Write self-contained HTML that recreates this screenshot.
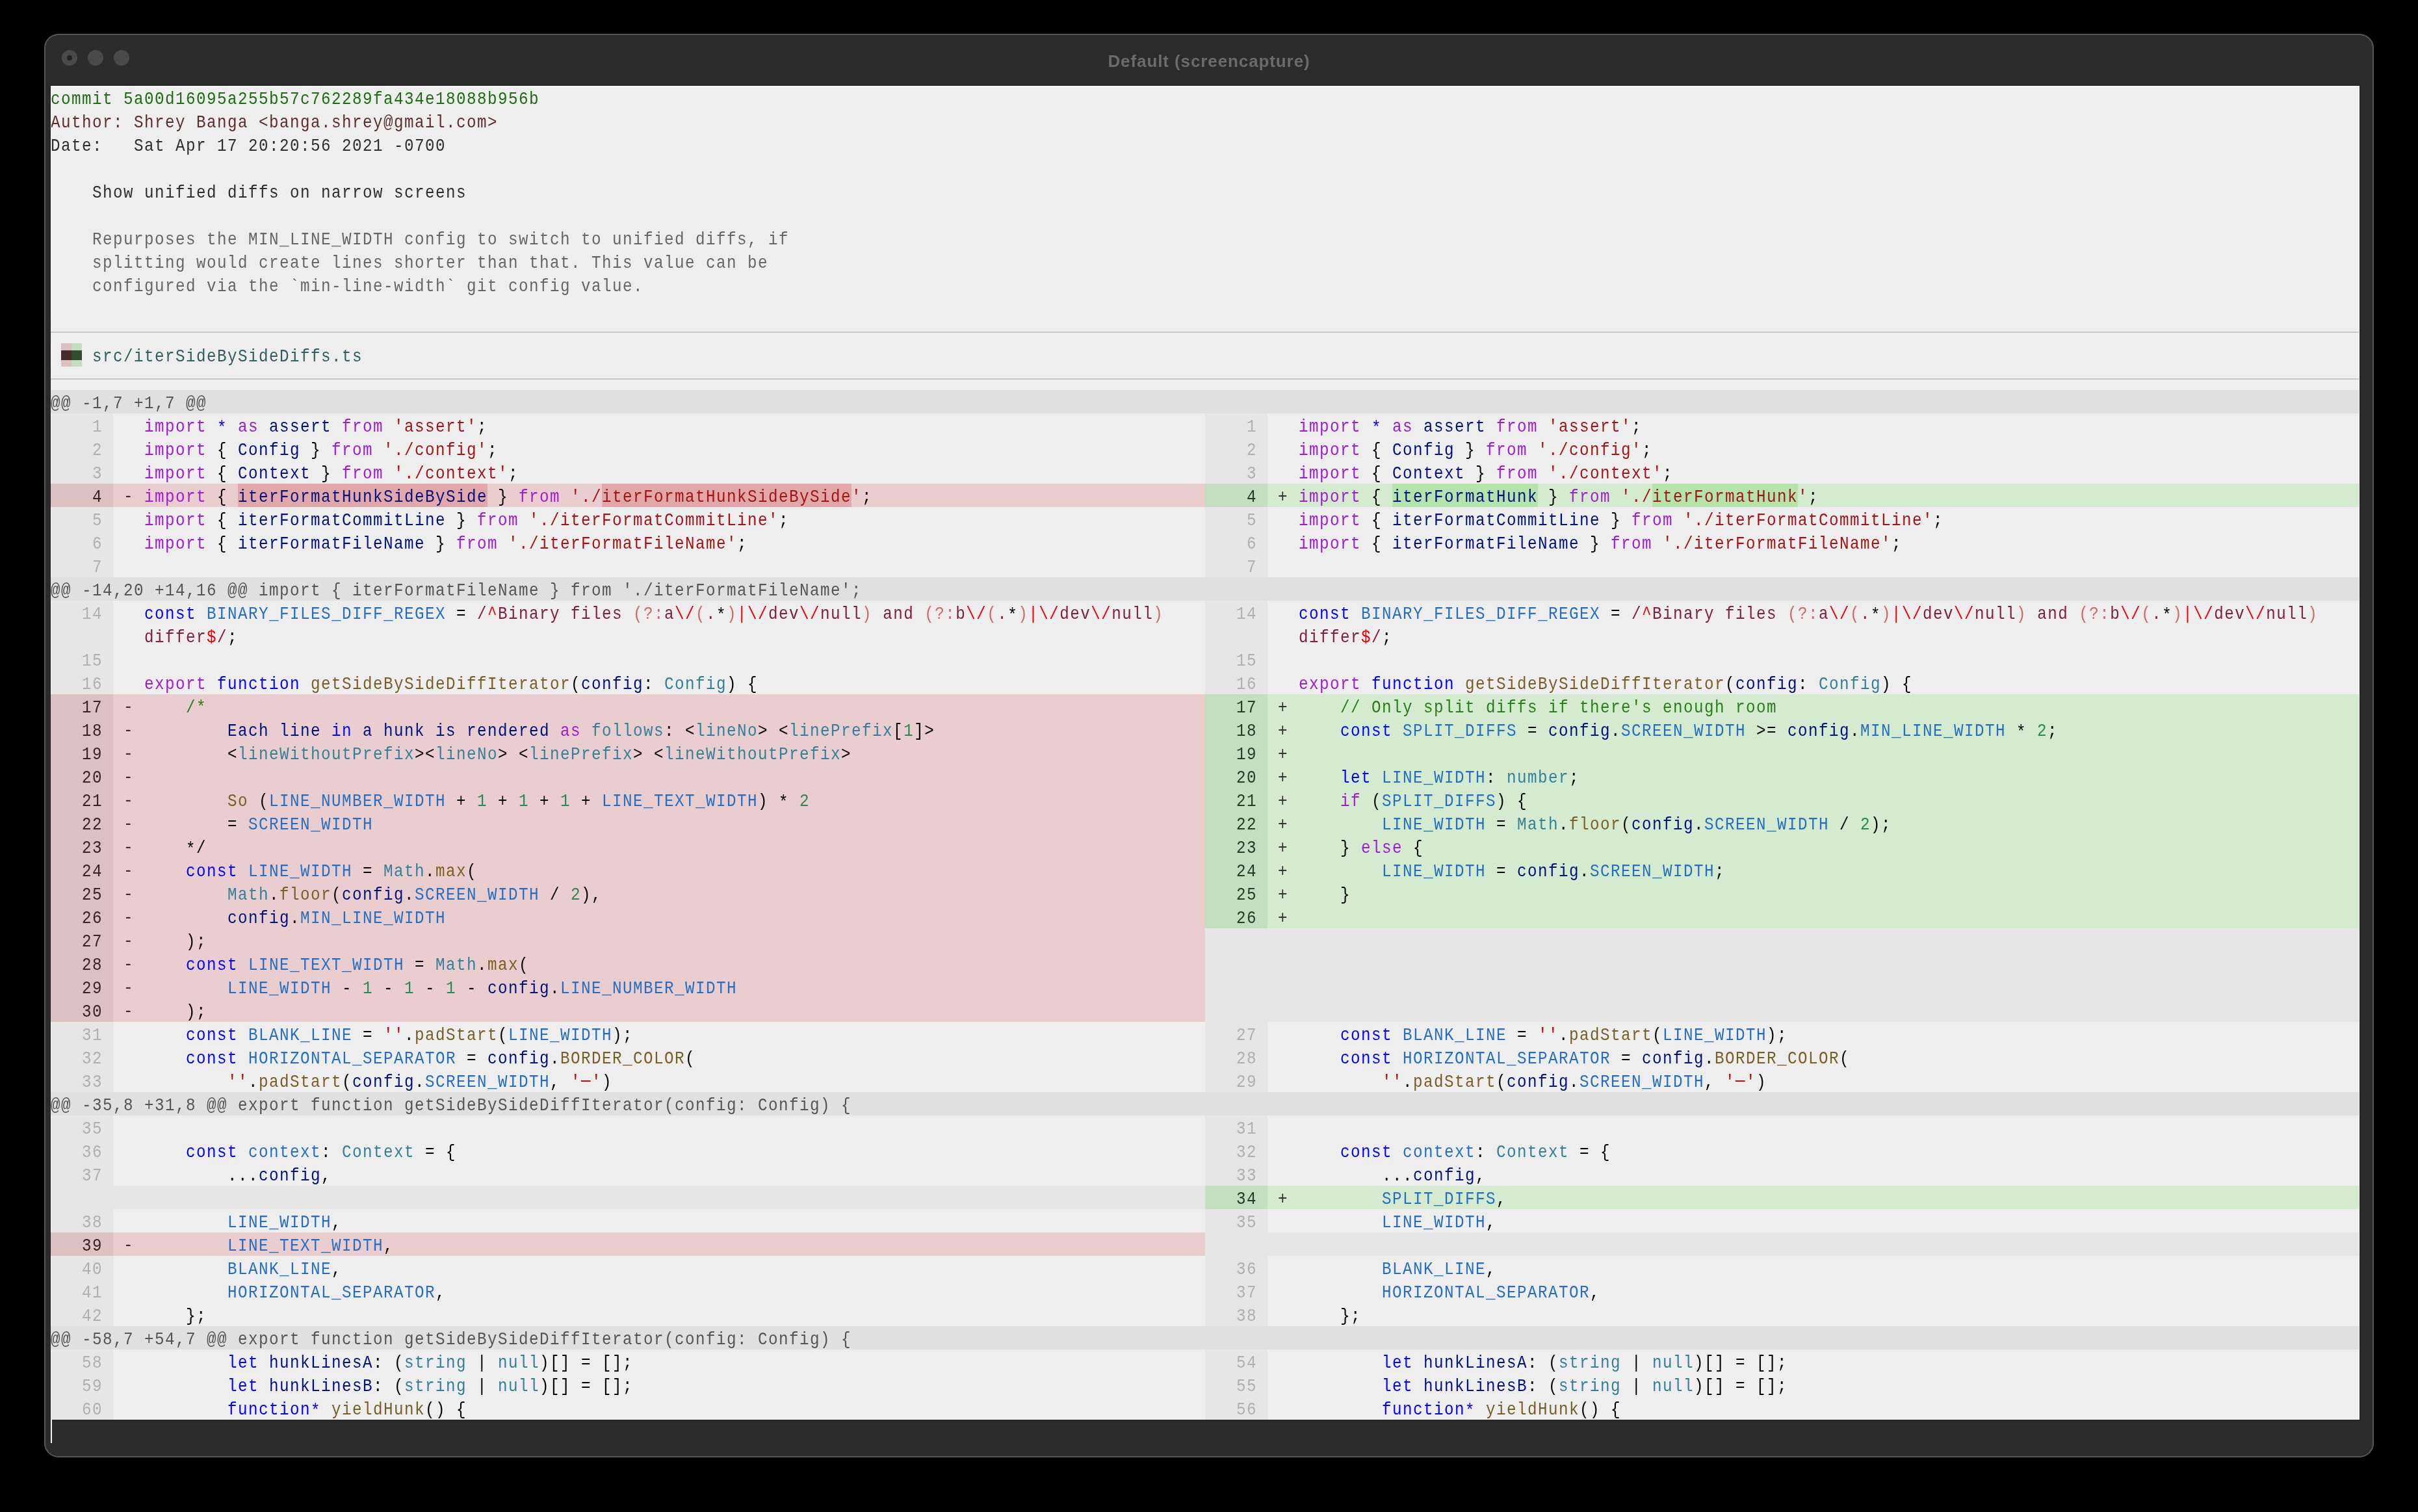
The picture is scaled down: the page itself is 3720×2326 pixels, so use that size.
<!DOCTYPE html>
<html><head><meta charset="utf-8"><style>
html,body{margin:0;padding:0;}
body{width:3720px;height:2326px;background:#000;position:relative;overflow:hidden;}
#w div{position:absolute;}
#w{position:absolute;left:0;top:0;width:3720px;height:2326px;will-change:transform;}
.t{font-family:"Liberation Mono",monospace;font-size:28.5px;letter-spacing:1.720746px;line-height:36px;white-space:pre;height:36px;padding-top:3px;box-sizing:border-box;transform:scaleX(0.85);transform-origin:0 0;}
</style></head><body><div id="w">
<div style="left:68px;top:52px;width:3584px;height:2190px;border-radius:22px;background:#2b2b2b;box-shadow:inset 0 0 0 2px #555;"></div>
<div style="left:95px;top:77px;width:24px;height:24px;border-radius:50%;background:#4a4a4a"></div>
<div style="left:103px;top:85px;width:8px;height:8px;border-radius:50%;background:#242424"></div>
<div style="left:135px;top:77px;width:24px;height:24px;border-radius:50%;background:#4a4a4a"></div>
<div style="left:175px;top:77px;width:24px;height:24px;border-radius:50%;background:#4a4a4a"></div>
<div style="left:0;top:74px;width:3720px;text-align:center;font-family:'Liberation Sans',sans-serif;font-weight:bold;font-size:26px;letter-spacing:0.9px;line-height:40px;color:#6b6b6b">Default (screencapture)</div>
<div style="left:77px;top:131px;width:3554px;height:2054px;background:#1e1e1e"></div>
<div style="left:78px;top:132px;width:3552px;height:2052px;background:#eeeeee"></div>
<div style="left:78px;top:510px;width:3552px;height:2px;background:#c9c9c9"></div><div style="left:94px;top:528px;width:16px;height:36px;background:#dbc0c2"></div><div style="left:110px;top:528px;width:16px;height:36px;background:#c4dcc0"></div><div style="left:94px;top:539px;width:16px;height:15px;background:#4a2b2d"></div><div style="left:110px;top:539px;width:16px;height:15px;background:#334d2f"></div><div style="left:78px;top:582px;width:3552px;height:2px;background:#c9c9c9"></div><div style="left:78px;top:600px;width:3552px;height:36px;background:#e0e0e0"></div><div style="left:78px;top:636px;width:96px;height:36px;background:#e6e6e6"></div><div style="left:1854px;top:636px;width:96px;height:36px;background:#e6e6e6"></div><div style="left:78px;top:672px;width:96px;height:36px;background:#e6e6e6"></div><div style="left:1854px;top:672px;width:96px;height:36px;background:#e6e6e6"></div><div style="left:78px;top:708px;width:96px;height:36px;background:#e6e6e6"></div><div style="left:1854px;top:708px;width:96px;height:36px;background:#e6e6e6"></div><div style="left:78px;top:744px;width:96px;height:36px;background:#dcc1c3"></div><div style="left:174px;top:744px;width:1680px;height:36px;background:#eacdce"></div><div style="left:366px;top:744px;width:384px;height:36px;background:#e2a8a9"></div><div style="left:926px;top:744px;width:384px;height:36px;background:#e2a8a9"></div><div style="left:1854px;top:744px;width:96px;height:36px;background:#c5ddc0"></div><div style="left:1950px;top:744px;width:1680px;height:36px;background:#d4ebcf"></div><div style="left:2142px;top:744px;width:224px;height:36px;background:#b4e3ac"></div><div style="left:2542px;top:744px;width:224px;height:36px;background:#b4e3ac"></div><div style="left:78px;top:780px;width:96px;height:36px;background:#e6e6e6"></div><div style="left:1854px;top:780px;width:96px;height:36px;background:#e6e6e6"></div><div style="left:78px;top:816px;width:96px;height:36px;background:#e6e6e6"></div><div style="left:1854px;top:816px;width:96px;height:36px;background:#e6e6e6"></div><div style="left:78px;top:852px;width:96px;height:36px;background:#e6e6e6"></div><div style="left:1854px;top:852px;width:96px;height:36px;background:#e6e6e6"></div><div style="left:78px;top:888px;width:3552px;height:36px;background:#e0e0e0"></div><div style="left:78px;top:924px;width:96px;height:36px;background:#e6e6e6"></div><div style="left:1854px;top:924px;width:96px;height:36px;background:#e6e6e6"></div><div style="left:78px;top:960px;width:96px;height:36px;background:#e6e6e6"></div><div style="left:1854px;top:960px;width:96px;height:36px;background:#e6e6e6"></div><div style="left:78px;top:996px;width:96px;height:36px;background:#e6e6e6"></div><div style="left:1854px;top:996px;width:96px;height:36px;background:#e6e6e6"></div><div style="left:78px;top:1032px;width:96px;height:36px;background:#e6e6e6"></div><div style="left:1854px;top:1032px;width:96px;height:36px;background:#e6e6e6"></div><div style="left:78px;top:1068px;width:96px;height:36px;background:#dcc1c3"></div><div style="left:174px;top:1068px;width:1680px;height:36px;background:#eacdce"></div><div style="left:1854px;top:1068px;width:96px;height:36px;background:#c5ddc0"></div><div style="left:1950px;top:1068px;width:1680px;height:36px;background:#d4ebcf"></div><div style="left:78px;top:1104px;width:96px;height:36px;background:#dcc1c3"></div><div style="left:174px;top:1104px;width:1680px;height:36px;background:#eacdce"></div><div style="left:1854px;top:1104px;width:96px;height:36px;background:#c5ddc0"></div><div style="left:1950px;top:1104px;width:1680px;height:36px;background:#d4ebcf"></div><div style="left:78px;top:1140px;width:96px;height:36px;background:#dcc1c3"></div><div style="left:174px;top:1140px;width:1680px;height:36px;background:#eacdce"></div><div style="left:1854px;top:1140px;width:96px;height:36px;background:#c5ddc0"></div><div style="left:1950px;top:1140px;width:1680px;height:36px;background:#d4ebcf"></div><div style="left:78px;top:1176px;width:96px;height:36px;background:#dcc1c3"></div><div style="left:174px;top:1176px;width:1680px;height:36px;background:#eacdce"></div><div style="left:1854px;top:1176px;width:96px;height:36px;background:#c5ddc0"></div><div style="left:1950px;top:1176px;width:1680px;height:36px;background:#d4ebcf"></div><div style="left:78px;top:1212px;width:96px;height:36px;background:#dcc1c3"></div><div style="left:174px;top:1212px;width:1680px;height:36px;background:#eacdce"></div><div style="left:1854px;top:1212px;width:96px;height:36px;background:#c5ddc0"></div><div style="left:1950px;top:1212px;width:1680px;height:36px;background:#d4ebcf"></div><div style="left:78px;top:1248px;width:96px;height:36px;background:#dcc1c3"></div><div style="left:174px;top:1248px;width:1680px;height:36px;background:#eacdce"></div><div style="left:1854px;top:1248px;width:96px;height:36px;background:#c5ddc0"></div><div style="left:1950px;top:1248px;width:1680px;height:36px;background:#d4ebcf"></div><div style="left:78px;top:1284px;width:96px;height:36px;background:#dcc1c3"></div><div style="left:174px;top:1284px;width:1680px;height:36px;background:#eacdce"></div><div style="left:1854px;top:1284px;width:96px;height:36px;background:#c5ddc0"></div><div style="left:1950px;top:1284px;width:1680px;height:36px;background:#d4ebcf"></div><div style="left:78px;top:1320px;width:96px;height:36px;background:#dcc1c3"></div><div style="left:174px;top:1320px;width:1680px;height:36px;background:#eacdce"></div><div style="left:1854px;top:1320px;width:96px;height:36px;background:#c5ddc0"></div><div style="left:1950px;top:1320px;width:1680px;height:36px;background:#d4ebcf"></div><div style="left:78px;top:1356px;width:96px;height:36px;background:#dcc1c3"></div><div style="left:174px;top:1356px;width:1680px;height:36px;background:#eacdce"></div><div style="left:1854px;top:1356px;width:96px;height:36px;background:#c5ddc0"></div><div style="left:1950px;top:1356px;width:1680px;height:36px;background:#d4ebcf"></div><div style="left:78px;top:1392px;width:96px;height:36px;background:#dcc1c3"></div><div style="left:174px;top:1392px;width:1680px;height:36px;background:#eacdce"></div><div style="left:1854px;top:1392px;width:96px;height:36px;background:#c5ddc0"></div><div style="left:1950px;top:1392px;width:1680px;height:36px;background:#d4ebcf"></div><div style="left:78px;top:1428px;width:96px;height:36px;background:#dcc1c3"></div><div style="left:174px;top:1428px;width:1680px;height:36px;background:#eacdce"></div><div style="left:1854px;top:1428px;width:1776px;height:36px;background:#e6e6e6"></div><div style="left:78px;top:1464px;width:96px;height:36px;background:#dcc1c3"></div><div style="left:174px;top:1464px;width:1680px;height:36px;background:#eacdce"></div><div style="left:1854px;top:1464px;width:1776px;height:36px;background:#e6e6e6"></div><div style="left:78px;top:1500px;width:96px;height:36px;background:#dcc1c3"></div><div style="left:174px;top:1500px;width:1680px;height:36px;background:#eacdce"></div><div style="left:1854px;top:1500px;width:1776px;height:36px;background:#e6e6e6"></div><div style="left:78px;top:1536px;width:96px;height:36px;background:#dcc1c3"></div><div style="left:174px;top:1536px;width:1680px;height:36px;background:#eacdce"></div><div style="left:1854px;top:1536px;width:1776px;height:36px;background:#e6e6e6"></div><div style="left:78px;top:1572px;width:96px;height:36px;background:#e6e6e6"></div><div style="left:1854px;top:1572px;width:96px;height:36px;background:#e6e6e6"></div><div style="left:78px;top:1608px;width:96px;height:36px;background:#e6e6e6"></div><div style="left:1854px;top:1608px;width:96px;height:36px;background:#e6e6e6"></div><div style="left:78px;top:1644px;width:96px;height:36px;background:#e6e6e6"></div><div style="left:1854px;top:1644px;width:96px;height:36px;background:#e6e6e6"></div><div style="left:78px;top:1680px;width:3552px;height:36px;background:#e0e0e0"></div><div style="left:78px;top:1716px;width:96px;height:36px;background:#e6e6e6"></div><div style="left:1854px;top:1716px;width:96px;height:36px;background:#e6e6e6"></div><div style="left:78px;top:1752px;width:96px;height:36px;background:#e6e6e6"></div><div style="left:1854px;top:1752px;width:96px;height:36px;background:#e6e6e6"></div><div style="left:78px;top:1788px;width:96px;height:36px;background:#e6e6e6"></div><div style="left:1854px;top:1788px;width:96px;height:36px;background:#e6e6e6"></div><div style="left:78px;top:1824px;width:1776px;height:36px;background:#e6e6e6"></div><div style="left:1854px;top:1824px;width:96px;height:36px;background:#c5ddc0"></div><div style="left:1950px;top:1824px;width:1680px;height:36px;background:#d4ebcf"></div><div style="left:78px;top:1860px;width:96px;height:36px;background:#e6e6e6"></div><div style="left:1854px;top:1860px;width:96px;height:36px;background:#e6e6e6"></div><div style="left:78px;top:1896px;width:96px;height:36px;background:#dcc1c3"></div><div style="left:174px;top:1896px;width:1680px;height:36px;background:#eacdce"></div><div style="left:1854px;top:1896px;width:1776px;height:36px;background:#e6e6e6"></div><div style="left:78px;top:1932px;width:96px;height:36px;background:#e6e6e6"></div><div style="left:1854px;top:1932px;width:96px;height:36px;background:#e6e6e6"></div><div style="left:78px;top:1968px;width:96px;height:36px;background:#e6e6e6"></div><div style="left:1854px;top:1968px;width:96px;height:36px;background:#e6e6e6"></div><div style="left:78px;top:2004px;width:96px;height:36px;background:#e6e6e6"></div><div style="left:1854px;top:2004px;width:96px;height:36px;background:#e6e6e6"></div><div style="left:78px;top:2040px;width:3552px;height:36px;background:#e0e0e0"></div><div style="left:78px;top:2076px;width:96px;height:36px;background:#e6e6e6"></div><div style="left:1854px;top:2076px;width:96px;height:36px;background:#e6e6e6"></div><div style="left:78px;top:2112px;width:96px;height:36px;background:#e6e6e6"></div><div style="left:1854px;top:2112px;width:96px;height:36px;background:#e6e6e6"></div><div style="left:78px;top:2148px;width:96px;height:36px;background:#e6e6e6"></div><div style="left:1854px;top:2148px;width:96px;height:36px;background:#e6e6e6"></div>
<div class="t" style="left:78px;top:132px;color:#1e6b12">commit 5a00d16095a255b57c762289fa434e18088b956b</div><div class="t" style="left:78px;top:168px;color:#5c2f2f">Author: Shrey Banga &lt;banga.shrey@gmail.com&gt;</div><div class="t" style="left:78px;top:204px;color:#2e2e2e">Date:   Sat Apr 17 20:20:56 2021 -0700</div><div class="t" style="left:78px;top:276px;color:#2e2e2e">    Show unified diffs on narrow screens</div><div class="t" style="left:78px;top:348px;color:#666666">    Repurposes the MIN_LINE_WIDTH config to switch to unified diffs, if</div><div class="t" style="left:78px;top:384px;color:#666666">    splitting would create lines shorter than that. This value can be</div><div class="t" style="left:78px;top:420px;color:#666666">    configured via the `min-line-width` git config value.</div><div class="t" style="left:142px;top:528px;color:#2f5e5e">src/iterSideBySideDiffs.ts</div><div class="t" style="left:78px;top:600px;color:#555555">@@ -1,7 +1,7 @@</div><div class="t" style="left:142px;top:636px;color:#b0b0b0">1</div><div class="t" style="left:222px;top:636px"><span style="color:#A01CD4">import</span> <span style="color:#0000FF;position:relative;top:2px">*</span> <span style="color:#A01CD4">as</span> <span style="color:#001080">assert</span> <span style="color:#A01CD4">from</span> <span style="color:#A31515">&#x27;assert&#x27;</span><span style="color:#000000">;</span></div><div class="t" style="left:1918px;top:636px;color:#b0b0b0">1</div><div class="t" style="left:1998px;top:636px"><span style="color:#A01CD4">import</span> <span style="color:#0000FF;position:relative;top:2px">*</span> <span style="color:#A01CD4">as</span> <span style="color:#001080">assert</span> <span style="color:#A01CD4">from</span> <span style="color:#A31515">&#x27;assert&#x27;</span><span style="color:#000000">;</span></div><div class="t" style="left:142px;top:672px;color:#b0b0b0">2</div><div class="t" style="left:222px;top:672px"><span style="color:#A01CD4">import</span> <span style="color:#000000">{</span> <span style="color:#001080">Config</span> <span style="color:#000000">}</span> <span style="color:#A01CD4">from</span> <span style="color:#A31515">&#x27;./config&#x27;</span><span style="color:#000000">;</span></div><div class="t" style="left:1918px;top:672px;color:#b0b0b0">2</div><div class="t" style="left:1998px;top:672px"><span style="color:#A01CD4">import</span> <span style="color:#000000">{</span> <span style="color:#001080">Config</span> <span style="color:#000000">}</span> <span style="color:#A01CD4">from</span> <span style="color:#A31515">&#x27;./config&#x27;</span><span style="color:#000000">;</span></div><div class="t" style="left:142px;top:708px;color:#b0b0b0">3</div><div class="t" style="left:222px;top:708px"><span style="color:#A01CD4">import</span> <span style="color:#000000">{</span> <span style="color:#001080">Context</span> <span style="color:#000000">}</span> <span style="color:#A01CD4">from</span> <span style="color:#A31515">&#x27;./context&#x27;</span><span style="color:#000000">;</span></div><div class="t" style="left:1918px;top:708px;color:#b0b0b0">3</div><div class="t" style="left:1998px;top:708px"><span style="color:#A01CD4">import</span> <span style="color:#000000">{</span> <span style="color:#001080">Context</span> <span style="color:#000000">}</span> <span style="color:#A01CD4">from</span> <span style="color:#A31515">&#x27;./context&#x27;</span><span style="color:#000000">;</span></div><div class="t" style="left:142px;top:744px;color:#3b2222">4</div><div class="t" style="left:190px;top:743px;color:#333">-</div><div class="t" style="left:222px;top:744px"><span style="color:#A01CD4">import</span> <span style="color:#000000">{</span> <span style="color:#001080">iterFormatHunkSideBySide</span> <span style="color:#000000">}</span> <span style="color:#A01CD4">from</span> <span style="color:#A31515">&#x27;./iterFormatHunkSideBySide&#x27;</span><span style="color:#000000">;</span></div><div class="t" style="left:1918px;top:744px;color:#243b24">4</div><div class="t" style="left:1966px;top:744px;color:#333">+</div><div class="t" style="left:1998px;top:744px"><span style="color:#A01CD4">import</span> <span style="color:#000000">{</span> <span style="color:#001080">iterFormatHunk</span> <span style="color:#000000">}</span> <span style="color:#A01CD4">from</span> <span style="color:#A31515">&#x27;./iterFormatHunk&#x27;</span><span style="color:#000000">;</span></div><div class="t" style="left:142px;top:780px;color:#b0b0b0">5</div><div class="t" style="left:222px;top:780px"><span style="color:#A01CD4">import</span> <span style="color:#000000">{</span> <span style="color:#001080">iterFormatCommitLine</span> <span style="color:#000000">}</span> <span style="color:#A01CD4">from</span> <span style="color:#A31515">&#x27;./iterFormatCommitLine&#x27;</span><span style="color:#000000">;</span></div><div class="t" style="left:1918px;top:780px;color:#b0b0b0">5</div><div class="t" style="left:1998px;top:780px"><span style="color:#A01CD4">import</span> <span style="color:#000000">{</span> <span style="color:#001080">iterFormatCommitLine</span> <span style="color:#000000">}</span> <span style="color:#A01CD4">from</span> <span style="color:#A31515">&#x27;./iterFormatCommitLine&#x27;</span><span style="color:#000000">;</span></div><div class="t" style="left:142px;top:816px;color:#b0b0b0">6</div><div class="t" style="left:222px;top:816px"><span style="color:#A01CD4">import</span> <span style="color:#000000">{</span> <span style="color:#001080">iterFormatFileName</span> <span style="color:#000000">}</span> <span style="color:#A01CD4">from</span> <span style="color:#A31515">&#x27;./iterFormatFileName&#x27;</span><span style="color:#000000">;</span></div><div class="t" style="left:1918px;top:816px;color:#b0b0b0">6</div><div class="t" style="left:1998px;top:816px"><span style="color:#A01CD4">import</span> <span style="color:#000000">{</span> <span style="color:#001080">iterFormatFileName</span> <span style="color:#000000">}</span> <span style="color:#A01CD4">from</span> <span style="color:#A31515">&#x27;./iterFormatFileName&#x27;</span><span style="color:#000000">;</span></div><div class="t" style="left:142px;top:852px;color:#b0b0b0">7</div><div class="t" style="left:1918px;top:852px;color:#b0b0b0">7</div><div class="t" style="left:78px;top:888px;color:#555555">@@ -14,20 +14,16 @@ import { iterFormatFileName } from &#x27;./iterFormatFileName&#x27;;</div><div class="t" style="left:126px;top:924px;color:#b0b0b0">14</div><div class="t" style="left:222px;top:924px"><span style="color:#0000FF">const</span> <span style="color:#256fc2">BINARY_FILES_DIFF_REGEX</span> <span style="color:#000000">=</span> <span style="color:#811F3F">/</span><span style="color:#EE0000">^</span><span style="color:#811F3F">Binary files </span><span style="color:#D16969">(?:</span><span style="color:#811F3F">a</span><span style="color:#EE0000">\/</span><span style="color:#D16969">(</span><span style="color:#811F3F">.</span><span style="color:#000000;position:relative;top:2px">*</span><span style="color:#D16969">)</span><span style="color:#EE0000">|</span><span style="color:#EE0000">\/</span><span style="color:#811F3F">dev</span><span style="color:#EE0000">\/</span><span style="color:#811F3F">null</span><span style="color:#D16969">)</span><span style="color:#811F3F"> and </span><span style="color:#D16969">(?:</span><span style="color:#811F3F">b</span><span style="color:#EE0000">\/</span><span style="color:#D16969">(</span><span style="color:#811F3F">.</span><span style="color:#000000;position:relative;top:2px">*</span><span style="color:#D16969">)</span><span style="color:#EE0000">|</span><span style="color:#EE0000">\/</span><span style="color:#811F3F">dev</span><span style="color:#EE0000">\/</span><span style="color:#811F3F">null</span><span style="color:#D16969">)</span></div><div class="t" style="left:1902px;top:924px;color:#b0b0b0">14</div><div class="t" style="left:1998px;top:924px"><span style="color:#0000FF">const</span> <span style="color:#256fc2">BINARY_FILES_DIFF_REGEX</span> <span style="color:#000000">=</span> <span style="color:#811F3F">/</span><span style="color:#EE0000">^</span><span style="color:#811F3F">Binary files </span><span style="color:#D16969">(?:</span><span style="color:#811F3F">a</span><span style="color:#EE0000">\/</span><span style="color:#D16969">(</span><span style="color:#811F3F">.</span><span style="color:#000000;position:relative;top:2px">*</span><span style="color:#D16969">)</span><span style="color:#EE0000">|</span><span style="color:#EE0000">\/</span><span style="color:#811F3F">dev</span><span style="color:#EE0000">\/</span><span style="color:#811F3F">null</span><span style="color:#D16969">)</span><span style="color:#811F3F"> and </span><span style="color:#D16969">(?:</span><span style="color:#811F3F">b</span><span style="color:#EE0000">\/</span><span style="color:#D16969">(</span><span style="color:#811F3F">.</span><span style="color:#000000;position:relative;top:2px">*</span><span style="color:#D16969">)</span><span style="color:#EE0000">|</span><span style="color:#EE0000">\/</span><span style="color:#811F3F">dev</span><span style="color:#EE0000">\/</span><span style="color:#811F3F">null</span><span style="color:#D16969">)</span></div><div class="t" style="left:222px;top:960px"><span style="color:#811F3F">differ</span><span style="color:#EE0000">$</span><span style="color:#811F3F">/</span><span style="color:#000000">;</span></div><div class="t" style="left:1998px;top:960px"><span style="color:#811F3F">differ</span><span style="color:#EE0000">$</span><span style="color:#811F3F">/</span><span style="color:#000000">;</span></div><div class="t" style="left:126px;top:996px;color:#b0b0b0">15</div><div class="t" style="left:1902px;top:996px;color:#b0b0b0">15</div><div class="t" style="left:126px;top:1032px;color:#b0b0b0">16</div><div class="t" style="left:222px;top:1032px"><span style="color:#A01CD4">export</span> <span style="color:#0000FF">function</span> <span style="color:#795E26">getSideBySideDiffIterator</span><span style="color:#000000">(</span><span style="color:#001080">config</span><span style="color:#000000">:</span> <span style="color:#348098">Config</span><span style="color:#000000">)</span> <span style="color:#000000">{</span></div><div class="t" style="left:1902px;top:1032px;color:#b0b0b0">16</div><div class="t" style="left:1998px;top:1032px"><span style="color:#A01CD4">export</span> <span style="color:#0000FF">function</span> <span style="color:#795E26">getSideBySideDiffIterator</span><span style="color:#000000">(</span><span style="color:#001080">config</span><span style="color:#000000">:</span> <span style="color:#348098">Config</span><span style="color:#000000">)</span> <span style="color:#000000">{</span></div><div class="t" style="left:126px;top:1068px;color:#3b2222">17</div><div class="t" style="left:190px;top:1067px;color:#333">-</div><div class="t" style="left:222px;top:1068px">    <span style="color:#2a7d1a">/*</span></div><div class="t" style="left:1902px;top:1068px;color:#243b24">17</div><div class="t" style="left:1966px;top:1068px;color:#333">+</div><div class="t" style="left:1998px;top:1068px">    <span style="color:#2a7d1a">// Only split diffs if there&#x27;s enough room</span></div><div class="t" style="left:126px;top:1104px;color:#3b2222">18</div><div class="t" style="left:190px;top:1103px;color:#333">-</div><div class="t" style="left:222px;top:1104px">        <span style="color:#001080">Each</span> <span style="color:#001080">line</span> <span style="color:#0000FF">in</span> <span style="color:#001080">a</span> <span style="color:#001080">hunk</span> <span style="color:#001080">is</span> <span style="color:#001080">rendered</span> <span style="color:#A01CD4">as</span> <span style="color:#348098">follows</span><span style="color:#000000">:</span> <span style="color:#000000">&lt;</span><span style="color:#348098">lineNo</span><span style="color:#000000">&gt;</span> <span style="color:#000000">&lt;</span><span style="color:#348098">linePrefix</span><span style="color:#000000">[</span><span style="color:#2a8a4c">1</span><span style="color:#000000">]</span><span style="color:#000000">&gt;</span></div><div class="t" style="left:1902px;top:1104px;color:#243b24">18</div><div class="t" style="left:1966px;top:1104px;color:#333">+</div><div class="t" style="left:1998px;top:1104px">    <span style="color:#0000FF">const</span> <span style="color:#256fc2">SPLIT_DIFFS</span> <span style="color:#000000">=</span> <span style="color:#001080">config</span><span style="color:#000000">.</span><span style="color:#256fc2">SCREEN_WIDTH</span> <span style="color:#000000">&gt;</span><span style="color:#000000">=</span> <span style="color:#001080">config</span><span style="color:#000000">.</span><span style="color:#256fc2">MIN_LINE_WIDTH</span> <span style="color:#000000;position:relative;top:2px">*</span> <span style="color:#2a8a4c">2</span><span style="color:#000000">;</span></div><div class="t" style="left:126px;top:1140px;color:#3b2222">19</div><div class="t" style="left:190px;top:1139px;color:#333">-</div><div class="t" style="left:222px;top:1140px">        <span style="color:#000000">&lt;</span><span style="color:#348098">lineWithoutPrefix</span><span style="color:#000000">&gt;</span><span style="color:#000000">&lt;</span><span style="color:#348098">lineNo</span><span style="color:#000000">&gt;</span> <span style="color:#000000">&lt;</span><span style="color:#348098">linePrefix</span><span style="color:#000000">&gt;</span> <span style="color:#000000">&lt;</span><span style="color:#348098">lineWithoutPrefix</span><span style="color:#000000">&gt;</span></div><div class="t" style="left:1902px;top:1140px;color:#243b24">19</div><div class="t" style="left:1966px;top:1140px;color:#333">+</div><div class="t" style="left:126px;top:1176px;color:#3b2222">20</div><div class="t" style="left:190px;top:1175px;color:#333">-</div><div class="t" style="left:1902px;top:1176px;color:#243b24">20</div><div class="t" style="left:1966px;top:1176px;color:#333">+</div><div class="t" style="left:1998px;top:1176px">    <span style="color:#0000FF">let</span> <span style="color:#256fc2">LINE_WIDTH</span><span style="color:#000000">:</span> <span style="color:#348098">number</span><span style="color:#000000">;</span></div><div class="t" style="left:126px;top:1212px;color:#3b2222">21</div><div class="t" style="left:190px;top:1211px;color:#333">-</div><div class="t" style="left:222px;top:1212px">        <span style="color:#795E26">So</span> <span style="color:#000000">(</span><span style="color:#256fc2">LINE_NUMBER_WIDTH</span> <span style="color:#000000">+</span> <span style="color:#2a8a4c">1</span> <span style="color:#000000">+</span> <span style="color:#2a8a4c">1</span> <span style="color:#000000">+</span> <span style="color:#2a8a4c">1</span> <span style="color:#000000">+</span> <span style="color:#256fc2">LINE_TEXT_WIDTH</span><span style="color:#000000">)</span> <span style="color:#000000;position:relative;top:2px">*</span> <span style="color:#2a8a4c">2</span></div><div class="t" style="left:1902px;top:1212px;color:#243b24">21</div><div class="t" style="left:1966px;top:1212px;color:#333">+</div><div class="t" style="left:1998px;top:1212px">    <span style="color:#A01CD4">if</span> <span style="color:#000000">(</span><span style="color:#256fc2">SPLIT_DIFFS</span><span style="color:#000000">)</span> <span style="color:#000000">{</span></div><div class="t" style="left:126px;top:1248px;color:#3b2222">22</div><div class="t" style="left:190px;top:1247px;color:#333">-</div><div class="t" style="left:222px;top:1248px">        <span style="color:#000000">=</span> <span style="color:#256fc2">SCREEN_WIDTH</span></div><div class="t" style="left:1902px;top:1248px;color:#243b24">22</div><div class="t" style="left:1966px;top:1248px;color:#333">+</div><div class="t" style="left:1998px;top:1248px">        <span style="color:#256fc2">LINE_WIDTH</span> <span style="color:#000000">=</span> <span style="color:#348098">Math</span><span style="color:#000000">.</span><span style="color:#795E26">floor</span><span style="color:#000000">(</span><span style="color:#001080">config</span><span style="color:#000000">.</span><span style="color:#256fc2">SCREEN_WIDTH</span> <span style="color:#000000">/</span> <span style="color:#2a8a4c">2</span><span style="color:#000000">)</span><span style="color:#000000">;</span></div><div class="t" style="left:126px;top:1284px;color:#3b2222">23</div><div class="t" style="left:190px;top:1283px;color:#333">-</div><div class="t" style="left:222px;top:1284px">    <span style="color:#000000;position:relative;top:2px">*</span><span style="color:#000000">/</span></div><div class="t" style="left:1902px;top:1284px;color:#243b24">23</div><div class="t" style="left:1966px;top:1284px;color:#333">+</div><div class="t" style="left:1998px;top:1284px">    <span style="color:#000000">}</span> <span style="color:#A01CD4">else</span> <span style="color:#000000">{</span></div><div class="t" style="left:126px;top:1320px;color:#3b2222">24</div><div class="t" style="left:190px;top:1319px;color:#333">-</div><div class="t" style="left:222px;top:1320px">    <span style="color:#0000FF">const</span> <span style="color:#256fc2">LINE_WIDTH</span> <span style="color:#000000">=</span> <span style="color:#348098">Math</span><span style="color:#000000">.</span><span style="color:#795E26">max</span><span style="color:#000000">(</span></div><div class="t" style="left:1902px;top:1320px;color:#243b24">24</div><div class="t" style="left:1966px;top:1320px;color:#333">+</div><div class="t" style="left:1998px;top:1320px">        <span style="color:#256fc2">LINE_WIDTH</span> <span style="color:#000000">=</span> <span style="color:#001080">config</span><span style="color:#000000">.</span><span style="color:#256fc2">SCREEN_WIDTH</span><span style="color:#000000">;</span></div><div class="t" style="left:126px;top:1356px;color:#3b2222">25</div><div class="t" style="left:190px;top:1355px;color:#333">-</div><div class="t" style="left:222px;top:1356px">        <span style="color:#348098">Math</span><span style="color:#000000">.</span><span style="color:#795E26">floor</span><span style="color:#000000">(</span><span style="color:#001080">config</span><span style="color:#000000">.</span><span style="color:#256fc2">SCREEN_WIDTH</span> <span style="color:#000000">/</span> <span style="color:#2a8a4c">2</span><span style="color:#000000">)</span><span style="color:#000000">,</span></div><div class="t" style="left:1902px;top:1356px;color:#243b24">25</div><div class="t" style="left:1966px;top:1356px;color:#333">+</div><div class="t" style="left:1998px;top:1356px">    <span style="color:#000000">}</span></div><div class="t" style="left:126px;top:1392px;color:#3b2222">26</div><div class="t" style="left:190px;top:1391px;color:#333">-</div><div class="t" style="left:222px;top:1392px">        <span style="color:#001080">config</span><span style="color:#000000">.</span><span style="color:#256fc2">MIN_LINE_WIDTH</span></div><div class="t" style="left:1902px;top:1392px;color:#243b24">26</div><div class="t" style="left:1966px;top:1392px;color:#333">+</div><div class="t" style="left:126px;top:1428px;color:#3b2222">27</div><div class="t" style="left:190px;top:1427px;color:#333">-</div><div class="t" style="left:222px;top:1428px">    <span style="color:#000000">)</span><span style="color:#000000">;</span></div><div class="t" style="left:126px;top:1464px;color:#3b2222">28</div><div class="t" style="left:190px;top:1463px;color:#333">-</div><div class="t" style="left:222px;top:1464px">    <span style="color:#0000FF">const</span> <span style="color:#256fc2">LINE_TEXT_WIDTH</span> <span style="color:#000000">=</span> <span style="color:#348098">Math</span><span style="color:#000000">.</span><span style="color:#795E26">max</span><span style="color:#000000">(</span></div><div class="t" style="left:126px;top:1500px;color:#3b2222">29</div><div class="t" style="left:190px;top:1499px;color:#333">-</div><div class="t" style="left:222px;top:1500px">        <span style="color:#256fc2">LINE_WIDTH</span> <span style="color:#000000">-</span> <span style="color:#2a8a4c">1</span> <span style="color:#000000">-</span> <span style="color:#2a8a4c">1</span> <span style="color:#000000">-</span> <span style="color:#2a8a4c">1</span> <span style="color:#000000">-</span> <span style="color:#001080">config</span><span style="color:#000000">.</span><span style="color:#256fc2">LINE_NUMBER_WIDTH</span></div><div class="t" style="left:126px;top:1536px;color:#3b2222">30</div><div class="t" style="left:190px;top:1535px;color:#333">-</div><div class="t" style="left:222px;top:1536px">    <span style="color:#000000">)</span><span style="color:#000000">;</span></div><div class="t" style="left:126px;top:1572px;color:#b0b0b0">31</div><div class="t" style="left:222px;top:1572px">    <span style="color:#0000FF">const</span> <span style="color:#256fc2">BLANK_LINE</span> <span style="color:#000000">=</span> <span style="color:#A31515">&#x27;&#x27;</span><span style="color:#000000">.</span><span style="color:#795E26">padStart</span><span style="color:#000000">(</span><span style="color:#256fc2">LINE_WIDTH</span><span style="color:#000000">)</span><span style="color:#000000">;</span></div><div class="t" style="left:1902px;top:1572px;color:#b0b0b0">27</div><div class="t" style="left:1998px;top:1572px">    <span style="color:#0000FF">const</span> <span style="color:#256fc2">BLANK_LINE</span> <span style="color:#000000">=</span> <span style="color:#A31515">&#x27;&#x27;</span><span style="color:#000000">.</span><span style="color:#795E26">padStart</span><span style="color:#000000">(</span><span style="color:#256fc2">LINE_WIDTH</span><span style="color:#000000">)</span><span style="color:#000000">;</span></div><div class="t" style="left:126px;top:1608px;color:#b0b0b0">32</div><div class="t" style="left:222px;top:1608px">    <span style="color:#0000FF">const</span> <span style="color:#256fc2">HORIZONTAL_SEPARATOR</span> <span style="color:#000000">=</span> <span style="color:#001080">config</span><span style="color:#000000">.</span><span style="color:#795E26">BORDER_COLOR</span><span style="color:#000000">(</span></div><div class="t" style="left:1902px;top:1608px;color:#b0b0b0">28</div><div class="t" style="left:1998px;top:1608px">    <span style="color:#0000FF">const</span> <span style="color:#256fc2">HORIZONTAL_SEPARATOR</span> <span style="color:#000000">=</span> <span style="color:#001080">config</span><span style="color:#000000">.</span><span style="color:#795E26">BORDER_COLOR</span><span style="color:#000000">(</span></div><div class="t" style="left:126px;top:1644px;color:#b0b0b0">33</div><div class="t" style="left:222px;top:1644px">        <span style="color:#A31515">&#x27;&#x27;</span><span style="color:#000000">.</span><span style="color:#795E26">padStart</span><span style="color:#000000">(</span><span style="color:#001080">config</span><span style="color:#000000">.</span><span style="color:#256fc2">SCREEN_WIDTH</span><span style="color:#000000">,</span> <span style="color:#A31515">&#x27;─&#x27;</span><span style="color:#000000">)</span></div><div class="t" style="left:1902px;top:1644px;color:#b0b0b0">29</div><div class="t" style="left:1998px;top:1644px">        <span style="color:#A31515">&#x27;&#x27;</span><span style="color:#000000">.</span><span style="color:#795E26">padStart</span><span style="color:#000000">(</span><span style="color:#001080">config</span><span style="color:#000000">.</span><span style="color:#256fc2">SCREEN_WIDTH</span><span style="color:#000000">,</span> <span style="color:#A31515">&#x27;─&#x27;</span><span style="color:#000000">)</span></div><div class="t" style="left:78px;top:1680px;color:#555555">@@ -35,8 +31,8 @@ export function getSideBySideDiffIterator(config: Config) {</div><div class="t" style="left:126px;top:1716px;color:#b0b0b0">35</div><div class="t" style="left:1902px;top:1716px;color:#b0b0b0">31</div><div class="t" style="left:126px;top:1752px;color:#b0b0b0">36</div><div class="t" style="left:222px;top:1752px">    <span style="color:#0000FF">const</span> <span style="color:#256fc2">context</span><span style="color:#000000">:</span> <span style="color:#348098">Context</span> <span style="color:#000000">=</span> <span style="color:#000000">{</span></div><div class="t" style="left:1902px;top:1752px;color:#b0b0b0">32</div><div class="t" style="left:1998px;top:1752px">    <span style="color:#0000FF">const</span> <span style="color:#256fc2">context</span><span style="color:#000000">:</span> <span style="color:#348098">Context</span> <span style="color:#000000">=</span> <span style="color:#000000">{</span></div><div class="t" style="left:126px;top:1788px;color:#b0b0b0">37</div><div class="t" style="left:222px;top:1788px">        <span style="color:#000000">.</span><span style="color:#000000">.</span><span style="color:#000000">.</span><span style="color:#001080">config</span><span style="color:#000000">,</span></div><div class="t" style="left:1902px;top:1788px;color:#b0b0b0">33</div><div class="t" style="left:1998px;top:1788px">        <span style="color:#000000">.</span><span style="color:#000000">.</span><span style="color:#000000">.</span><span style="color:#001080">config</span><span style="color:#000000">,</span></div><div class="t" style="left:1902px;top:1824px;color:#243b24">34</div><div class="t" style="left:1966px;top:1824px;color:#333">+</div><div class="t" style="left:1998px;top:1824px">        <span style="color:#256fc2">SPLIT_DIFFS</span><span style="color:#000000">,</span></div><div class="t" style="left:126px;top:1860px;color:#b0b0b0">38</div><div class="t" style="left:222px;top:1860px">        <span style="color:#256fc2">LINE_WIDTH</span><span style="color:#000000">,</span></div><div class="t" style="left:1902px;top:1860px;color:#b0b0b0">35</div><div class="t" style="left:1998px;top:1860px">        <span style="color:#256fc2">LINE_WIDTH</span><span style="color:#000000">,</span></div><div class="t" style="left:126px;top:1896px;color:#3b2222">39</div><div class="t" style="left:190px;top:1895px;color:#333">-</div><div class="t" style="left:222px;top:1896px">        <span style="color:#256fc2">LINE_TEXT_WIDTH</span><span style="color:#000000">,</span></div><div class="t" style="left:126px;top:1932px;color:#b0b0b0">40</div><div class="t" style="left:222px;top:1932px">        <span style="color:#256fc2">BLANK_LINE</span><span style="color:#000000">,</span></div><div class="t" style="left:1902px;top:1932px;color:#b0b0b0">36</div><div class="t" style="left:1998px;top:1932px">        <span style="color:#256fc2">BLANK_LINE</span><span style="color:#000000">,</span></div><div class="t" style="left:126px;top:1968px;color:#b0b0b0">41</div><div class="t" style="left:222px;top:1968px">        <span style="color:#256fc2">HORIZONTAL_SEPARATOR</span><span style="color:#000000">,</span></div><div class="t" style="left:1902px;top:1968px;color:#b0b0b0">37</div><div class="t" style="left:1998px;top:1968px">        <span style="color:#256fc2">HORIZONTAL_SEPARATOR</span><span style="color:#000000">,</span></div><div class="t" style="left:126px;top:2004px;color:#b0b0b0">42</div><div class="t" style="left:222px;top:2004px">    <span style="color:#000000">}</span><span style="color:#000000">;</span></div><div class="t" style="left:1902px;top:2004px;color:#b0b0b0">38</div><div class="t" style="left:1998px;top:2004px">    <span style="color:#000000">}</span><span style="color:#000000">;</span></div><div class="t" style="left:78px;top:2040px;color:#555555">@@ -58,7 +54,7 @@ export function getSideBySideDiffIterator(config: Config) {</div><div class="t" style="left:126px;top:2076px;color:#b0b0b0">58</div><div class="t" style="left:222px;top:2076px">        <span style="color:#0000FF">let</span> <span style="color:#001080">hunkLinesA</span><span style="color:#000000">:</span> <span style="color:#000000">(</span><span style="color:#348098">string</span> <span style="color:#000000">|</span> <span style="color:#348098">null</span><span style="color:#000000">)</span><span style="color:#000000">[</span><span style="color:#000000">]</span> <span style="color:#000000">=</span> <span style="color:#000000">[</span><span style="color:#000000">]</span><span style="color:#000000">;</span></div><div class="t" style="left:1902px;top:2076px;color:#b0b0b0">54</div><div class="t" style="left:1998px;top:2076px">        <span style="color:#0000FF">let</span> <span style="color:#001080">hunkLinesA</span><span style="color:#000000">:</span> <span style="color:#000000">(</span><span style="color:#348098">string</span> <span style="color:#000000">|</span> <span style="color:#348098">null</span><span style="color:#000000">)</span><span style="color:#000000">[</span><span style="color:#000000">]</span> <span style="color:#000000">=</span> <span style="color:#000000">[</span><span style="color:#000000">]</span><span style="color:#000000">;</span></div><div class="t" style="left:126px;top:2112px;color:#b0b0b0">59</div><div class="t" style="left:222px;top:2112px">        <span style="color:#0000FF">let</span> <span style="color:#001080">hunkLinesB</span><span style="color:#000000">:</span> <span style="color:#000000">(</span><span style="color:#348098">string</span> <span style="color:#000000">|</span> <span style="color:#348098">null</span><span style="color:#000000">)</span><span style="color:#000000">[</span><span style="color:#000000">]</span> <span style="color:#000000">=</span> <span style="color:#000000">[</span><span style="color:#000000">]</span><span style="color:#000000">;</span></div><div class="t" style="left:1902px;top:2112px;color:#b0b0b0">55</div><div class="t" style="left:1998px;top:2112px">        <span style="color:#0000FF">let</span> <span style="color:#001080">hunkLinesB</span><span style="color:#000000">:</span> <span style="color:#000000">(</span><span style="color:#348098">string</span> <span style="color:#000000">|</span> <span style="color:#348098">null</span><span style="color:#000000">)</span><span style="color:#000000">[</span><span style="color:#000000">]</span> <span style="color:#000000">=</span> <span style="color:#000000">[</span><span style="color:#000000">]</span><span style="color:#000000">;</span></div><div class="t" style="left:126px;top:2148px;color:#b0b0b0">60</div><div class="t" style="left:222px;top:2148px">        <span style="color:#0000FF">function</span><span style="color:#0000FF;position:relative;top:2px">*</span> <span style="color:#795E26">yieldHunk</span><span style="color:#000000">(</span><span style="color:#000000">)</span> <span style="color:#000000">{</span></div><div class="t" style="left:1902px;top:2148px;color:#b0b0b0">56</div><div class="t" style="left:1998px;top:2148px">        <span style="color:#0000FF">function</span><span style="color:#0000FF;position:relative;top:2px">*</span> <span style="color:#795E26">yieldHunk</span><span style="color:#000000">(</span><span style="color:#000000">)</span> <span style="color:#000000">{</span></div>
<div style="left:78px;top:132px;width:3552px;height:1px;background:#fff"></div>
<div style="left:3629px;top:132px;width:1px;height:2052px;background:#fff"></div>
<div style="left:78px;top:132px;width:1px;height:36px;background:#f8f8f8"></div><div style="left:78px;top:168px;width:1px;height:36px;background:#f8f8f8"></div><div style="left:78px;top:204px;width:1px;height:36px;background:#f8f8f8"></div><div style="left:78px;top:240px;width:1px;height:36px;background:#f8f8f8"></div><div style="left:78px;top:276px;width:1px;height:36px;background:#f8f8f8"></div><div style="left:78px;top:312px;width:1px;height:36px;background:#f8f8f8"></div><div style="left:78px;top:348px;width:1px;height:36px;background:#f8f8f8"></div><div style="left:78px;top:384px;width:1px;height:36px;background:#f8f8f8"></div><div style="left:78px;top:420px;width:1px;height:36px;background:#f8f8f8"></div><div style="left:78px;top:456px;width:1px;height:36px;background:#f8f8f8"></div><div style="left:78px;top:528px;width:1px;height:36px;background:#f8f8f8"></div><div style="left:78px;top:636px;width:1px;height:36px;background:#f8f8f8"></div><div style="left:78px;top:672px;width:1px;height:36px;background:#f8f8f8"></div><div style="left:78px;top:708px;width:1px;height:36px;background:#f8f8f8"></div><div style="left:78px;top:780px;width:1px;height:36px;background:#f8f8f8"></div><div style="left:78px;top:816px;width:1px;height:36px;background:#f8f8f8"></div><div style="left:78px;top:852px;width:1px;height:36px;background:#f8f8f8"></div><div style="left:78px;top:924px;width:1px;height:36px;background:#f8f8f8"></div><div style="left:78px;top:960px;width:1px;height:36px;background:#f8f8f8"></div><div style="left:78px;top:996px;width:1px;height:36px;background:#f8f8f8"></div><div style="left:78px;top:1032px;width:1px;height:36px;background:#f8f8f8"></div><div style="left:78px;top:1572px;width:1px;height:36px;background:#f8f8f8"></div><div style="left:78px;top:1608px;width:1px;height:36px;background:#f8f8f8"></div><div style="left:78px;top:1644px;width:1px;height:36px;background:#f8f8f8"></div><div style="left:78px;top:1716px;width:1px;height:36px;background:#f8f8f8"></div><div style="left:78px;top:1752px;width:1px;height:36px;background:#f8f8f8"></div><div style="left:78px;top:1788px;width:1px;height:36px;background:#f8f8f8"></div><div style="left:78px;top:1824px;width:1px;height:36px;background:#f8f8f8"></div><div style="left:78px;top:1860px;width:1px;height:36px;background:#f8f8f8"></div><div style="left:78px;top:1932px;width:1px;height:36px;background:#f8f8f8"></div><div style="left:78px;top:1968px;width:1px;height:36px;background:#f8f8f8"></div><div style="left:78px;top:2004px;width:1px;height:36px;background:#f8f8f8"></div><div style="left:78px;top:2076px;width:1px;height:36px;background:#f8f8f8"></div><div style="left:78px;top:2112px;width:1px;height:36px;background:#f8f8f8"></div><div style="left:78px;top:2148px;width:1px;height:36px;background:#f8f8f8"></div>
<div style="left:78px;top:2184px;width:2px;height:36px;background:#f2f2f2"></div>
</div></body></html>
